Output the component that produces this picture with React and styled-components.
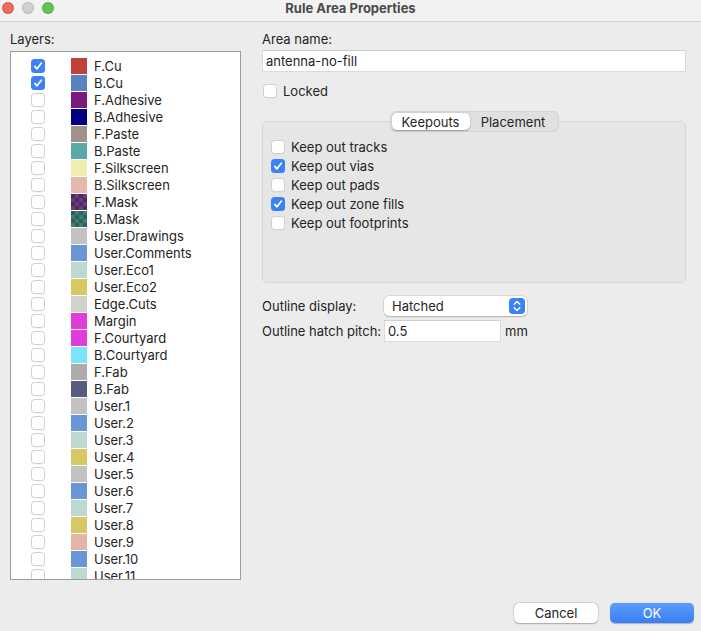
import React from "react";
import styled, { createGlobalStyle } from "styled-components";

const GlobalStyle = createGlobalStyle`
  html, body {
    margin: 0;
    padding: 0;
    background: #ececec;
  }
  body {
    font-family: Inter, "Liberation Sans", sans-serif;
    font-size: 13px;
    color: #242424;
  }
`;

const checkerA = "#4e2a5c";
const checkerB = "#6b3b7c";

const layers = [
  { name: "F.Cu", color: "#c0403a", on: true },
  { name: "B.Cu", color: "#5a82c0", on: true },
  { name: "F.Adhesive", color: "#7a1a80" },
  { name: "B.Adhesive", color: "#000080" },
  { name: "F.Paste", color: "#a0928a" },
  { name: "B.Paste", color: "#5aa8a8" },
  { name: "F.Silkscreen", color: "#f0eeb0" },
  { name: "B.Silkscreen", color: "#e4b8aa" },
  { name: "F.Mask", checker: [checkerA, checkerB] },
  { name: "B.Mask", checker: ["#2c625b", "#3f7d73"] },
  { name: "User.Drawings", color: "#c2c2c2" },
  { name: "User.Comments", color: "#6a96d8" },
  { name: "User.Eco1", color: "#bcd8d0" },
  { name: "User.Eco2", color: "#d6c864" },
  { name: "Edge.Cuts", color: "#d0d2cc" },
  { name: "Margin", color: "#e03cd8" },
  { name: "F.Courtyard", color: "#e03cd8" },
  { name: "B.Courtyard", color: "#7ae4f8" },
  { name: "F.Fab", color: "#acacac" },
  { name: "B.Fab", color: "#585b80" },
  { name: "User.1", color: "#c2c2c2" },
  { name: "User.2", color: "#6a96d8" },
  { name: "User.3", color: "#bcd8d0" },
  { name: "User.4", color: "#d6c864" },
  { name: "User.5", color: "#c2c2c2" },
  { name: "User.6", color: "#6a96d8" },
  { name: "User.7", color: "#bcd8d0" },
  { name: "User.8", color: "#d6c864" },
  { name: "User.9", color: "#e4b4a8" },
  { name: "User.10", color: "#6a96d8" },
  { name: "User.11", color: "#bcd8d0" },
];

const keepouts = [
  { label: "Keep out tracks" },
  { label: "Keep out vias", on: true },
  { label: "Keep out pads" },
  { label: "Keep out zone fills", on: true },
  { label: "Keep out footprints" },
];

const Window = styled.div`
  width: 701px;
  height: 631px;
  display: flex;
  flex-direction: column;
  overflow: hidden;
`;

const TitleBar = styled.div`
  height: 22px;
  box-sizing: border-box;
  padding-bottom: 6px;
  flex-shrink: 0;
  display: grid;
  grid-template-columns: 1fr auto 1fr;
  align-items: center;
  background: #f2f2f2;
  border-bottom: 1px solid #d2d2d2;
`;

const Lights = styled.div`
  display: flex;
  gap: 8px;
  padding-left: 2px;
`;

const Light = styled.span`
  width: 12px;
  height: 12px;
  border-radius: 50%;
  box-sizing: border-box;
  background: ${(p) => p.$color};
  border: 0.5px solid rgba(0, 0, 0, 0.12);
`;

const Title = styled.div`
  font-weight: 700;
  font-size: 13px;
  color: #4a4a4a;
`;

const Content = styled.div`
  flex: 1;
  display: flex;
  gap: 21px;
  padding: 9px 15px 0 10px;
  min-height: 0;
`;

const LeftColumn = styled.div`
  width: 231px;
  display: flex;
  flex-direction: column;
`;

const Label = styled.div`
  line-height: 16px;
  margin-bottom: ${(p) => p.$gap || 0}px;
`;

const LayerList = styled.div`
  height: 529px;
  box-sizing: border-box;
  background: #fff;
  border: 1px solid #9c9c9c;
  padding-top: 5px;
  overflow: hidden;
`;

const LayerRow = styled.div`
  height: 17px;
  display: flex;
  align-items: center;
  padding-left: 20px;
`;

const Swatch = styled.span`
  width: 16px;
  height: 16px;
  margin: 0 7px 0 26px;
  flex-shrink: 0;
  background-color: ${(p) => p.$color || p.$checker[0]};
  background-image: ${(p) =>
    p.$checker
      ? `conic-gradient(${p.$checker[1]} 25%, transparent 0 50%, ${p.$checker[1]} 0 75%, transparent 0)`
      : "none"};
  background-size: 8px 8px;
`;

const Box = styled.span`
  width: 14px;
  height: 14px;
  box-sizing: border-box;
  border-radius: 3.5px;
  flex-shrink: 0;
  display: inline-flex;
  align-items: center;
  justify-content: center;
  background: ${(p) => (p.$checked ? "#3b82f6" : "#fff")};
  border: ${(p) => (p.$checked ? "none" : "1px solid #cfcfcf")};
  box-shadow: ${(p) => (p.$checked ? "none" : "0 0.5px 0.5px rgba(0,0,0,0.05)")};
`;

const Checkbox = ({ checked }) => (
  <Box $checked={checked}>
    {checked && (
      <svg width="10" height="10" viewBox="0 0 10 10">
        <path
          d="M1.8 5.4 L4 7.8 L8.3 2.3"
          fill="none"
          stroke="#fff"
          strokeWidth="1.8"
          strokeLinecap="round"
          strokeLinejoin="round"
        />
      </svg>
    )}
  </Box>
);

const RightColumn = styled.div`
  flex: 1;
  display: flex;
  flex-direction: column;
`;

const TextField = styled.div`
  height: 22px;
  box-sizing: border-box;
  background: #fff;
  border: 1px solid #dadada;
  border-top-color: #cfcfcf;
  display: flex;
  align-items: center;
  padding-left: 3px;
  width: ${(p) => p.$width || "auto"};
`;

const CheckRow = styled.label`
  display: flex;
  align-items: center;
  gap: 6px;
  height: ${(p) => p.$height || 16}px;
  padding-left: 1px;
  margin-top: ${(p) => p.$top || 0}px;
`;

const TabArea = styled.div`
  margin-top: 12px;
  display: flex;
  flex-direction: column;
  align-items: center;
`;

const TabBar = styled.div`
  position: relative;
  z-index: 1;
  display: flex;
  height: 21px;
  box-sizing: border-box;
  padding: 1px;
  border-radius: 6px;
  background: #e0e0e0;
  border: 1px solid #d4d4d4;
  margin-bottom: -11px;
`;

const Tab = styled.div`
  display: flex;
  align-items: center;
  justify-content: center;
  width: ${(p) => p.$width}px;
  border-radius: 5px;
  background: ${(p) => (p.$active ? "#fff" : "transparent")};
  box-shadow: ${(p) =>
    p.$active ? "0 0.5px 1.5px rgba(0,0,0,0.3)" : "none"};
  color: #262626;
`;

const Panel = styled.div`
  align-self: stretch;
  height: 162px;
  box-sizing: border-box;
  background: #e6e6e6;
  border: 1px solid #d8d8d8;
  border-radius: 5px;
  padding: 15px 0 0 7px;
`;

const OptionGrid = styled.div`
  margin-top: 13px;
  display: grid;
  grid-template-columns: 122px auto;
  row-gap: 4px;
  align-items: center;
  justify-items: start;
`;

const Select = styled.div`
  width: 143px;
  height: 20px;
  box-sizing: border-box;
  background: #fff;
  border-radius: 5px;
  box-shadow: 0 0 0 0.5px rgba(0, 0, 0, 0.15), 0 1px 1.5px rgba(0, 0, 0, 0.2);
  display: flex;
  align-items: center;
  justify-content: space-between;
  padding: 0 2px 0 8px;
`;

const Stepper = () => (
  <svg width="16" height="16" viewBox="0 0 16 16">
    <rect width="16" height="16" rx="4" fill="#3b82f6" />
    <path
      d="M5.2 6.3 L8 3.6 L10.8 6.3 M5.2 9.7 L8 12.4 L10.8 9.7"
      fill="none"
      stroke="#fff"
      strokeWidth="1.4"
      strokeLinecap="round"
      strokeLinejoin="round"
    />
  </svg>
);

const Inline = styled.div`
  display: flex;
  align-items: center;
  gap: 4px;
`;

const Footer = styled.div`
  flex-shrink: 0;
  display: flex;
  justify-content: flex-end;
  gap: 12px;
  padding: 0 7px 8px;
`;

const Button = styled.button`
  width: 84px;
  height: 20px;
  border: none;
  border-radius: 5px;
  font: inherit;
  font-size: 13px;
  padding: 0;
  background: ${(p) =>
    p.$primary ? "linear-gradient(#5b9cf9, #3a7ef5)" : "#fff"};
  color: ${(p) => (p.$primary ? "#fff" : "#222")};
  box-shadow: ${(p) =>
    p.$primary
      ? "0 0.5px 1px rgba(0,0,0,0.25)"
      : "0 0 0 0.5px rgba(0,0,0,0.12), 0 0.5px 1.5px rgba(0,0,0,0.25)"};
`;

export default function App() {
  return (
    <>
      <GlobalStyle />
      <Window>
        <TitleBar>
          <Lights>
            <Light $color="#ec6a5e" />
            <Light $color="#d0d0d0" />
            <Light $color="#61c554" />
          </Lights>
          <Title>Rule Area Properties</Title>
          <div />
        </TitleBar>
        <Content>
          <LeftColumn>
            <Label $gap={4}>Layers:</Label>
            <LayerList>
              {layers.map((l) => (
                <LayerRow key={l.name}>
                  <Checkbox checked={l.on} />
                  <Swatch $color={l.color} $checker={l.checker} />
                  {l.name}
                </LayerRow>
              ))}
            </LayerList>
          </LeftColumn>
          <RightColumn>
            <Label $gap={3}>Area name:</Label>
            <TextField>antenna-no-fill</TextField>
            <CheckRow $top={11}>
              <Checkbox />
              Locked
            </CheckRow>
            <TabArea>
              <TabBar>
                <Tab $width={78} $active>
                  Keepouts
                </Tab>
                <Tab $width={87}>Placement</Tab>
              </TabBar>
              <Panel>
                {keepouts.map((k) => (
                  <CheckRow key={k.label} $height={19}>
                    <Checkbox checked={k.on} />
                    {k.label}
                  </CheckRow>
                ))}
              </Panel>
            </TabArea>
            <OptionGrid>
              <span>Outline display:</span>
              <Select>
                Hatched
                <Stepper />
              </Select>
              <span>Outline hatch pitch:</span>
              <Inline>
                <TextField $width="117px">0.5</TextField>
                mm
              </Inline>
            </OptionGrid>
          </RightColumn>
        </Content>
        <Footer>
          <Button>Cancel</Button>
          <Button $primary>OK</Button>
        </Footer>
      </Window>
    </>
  );
}
